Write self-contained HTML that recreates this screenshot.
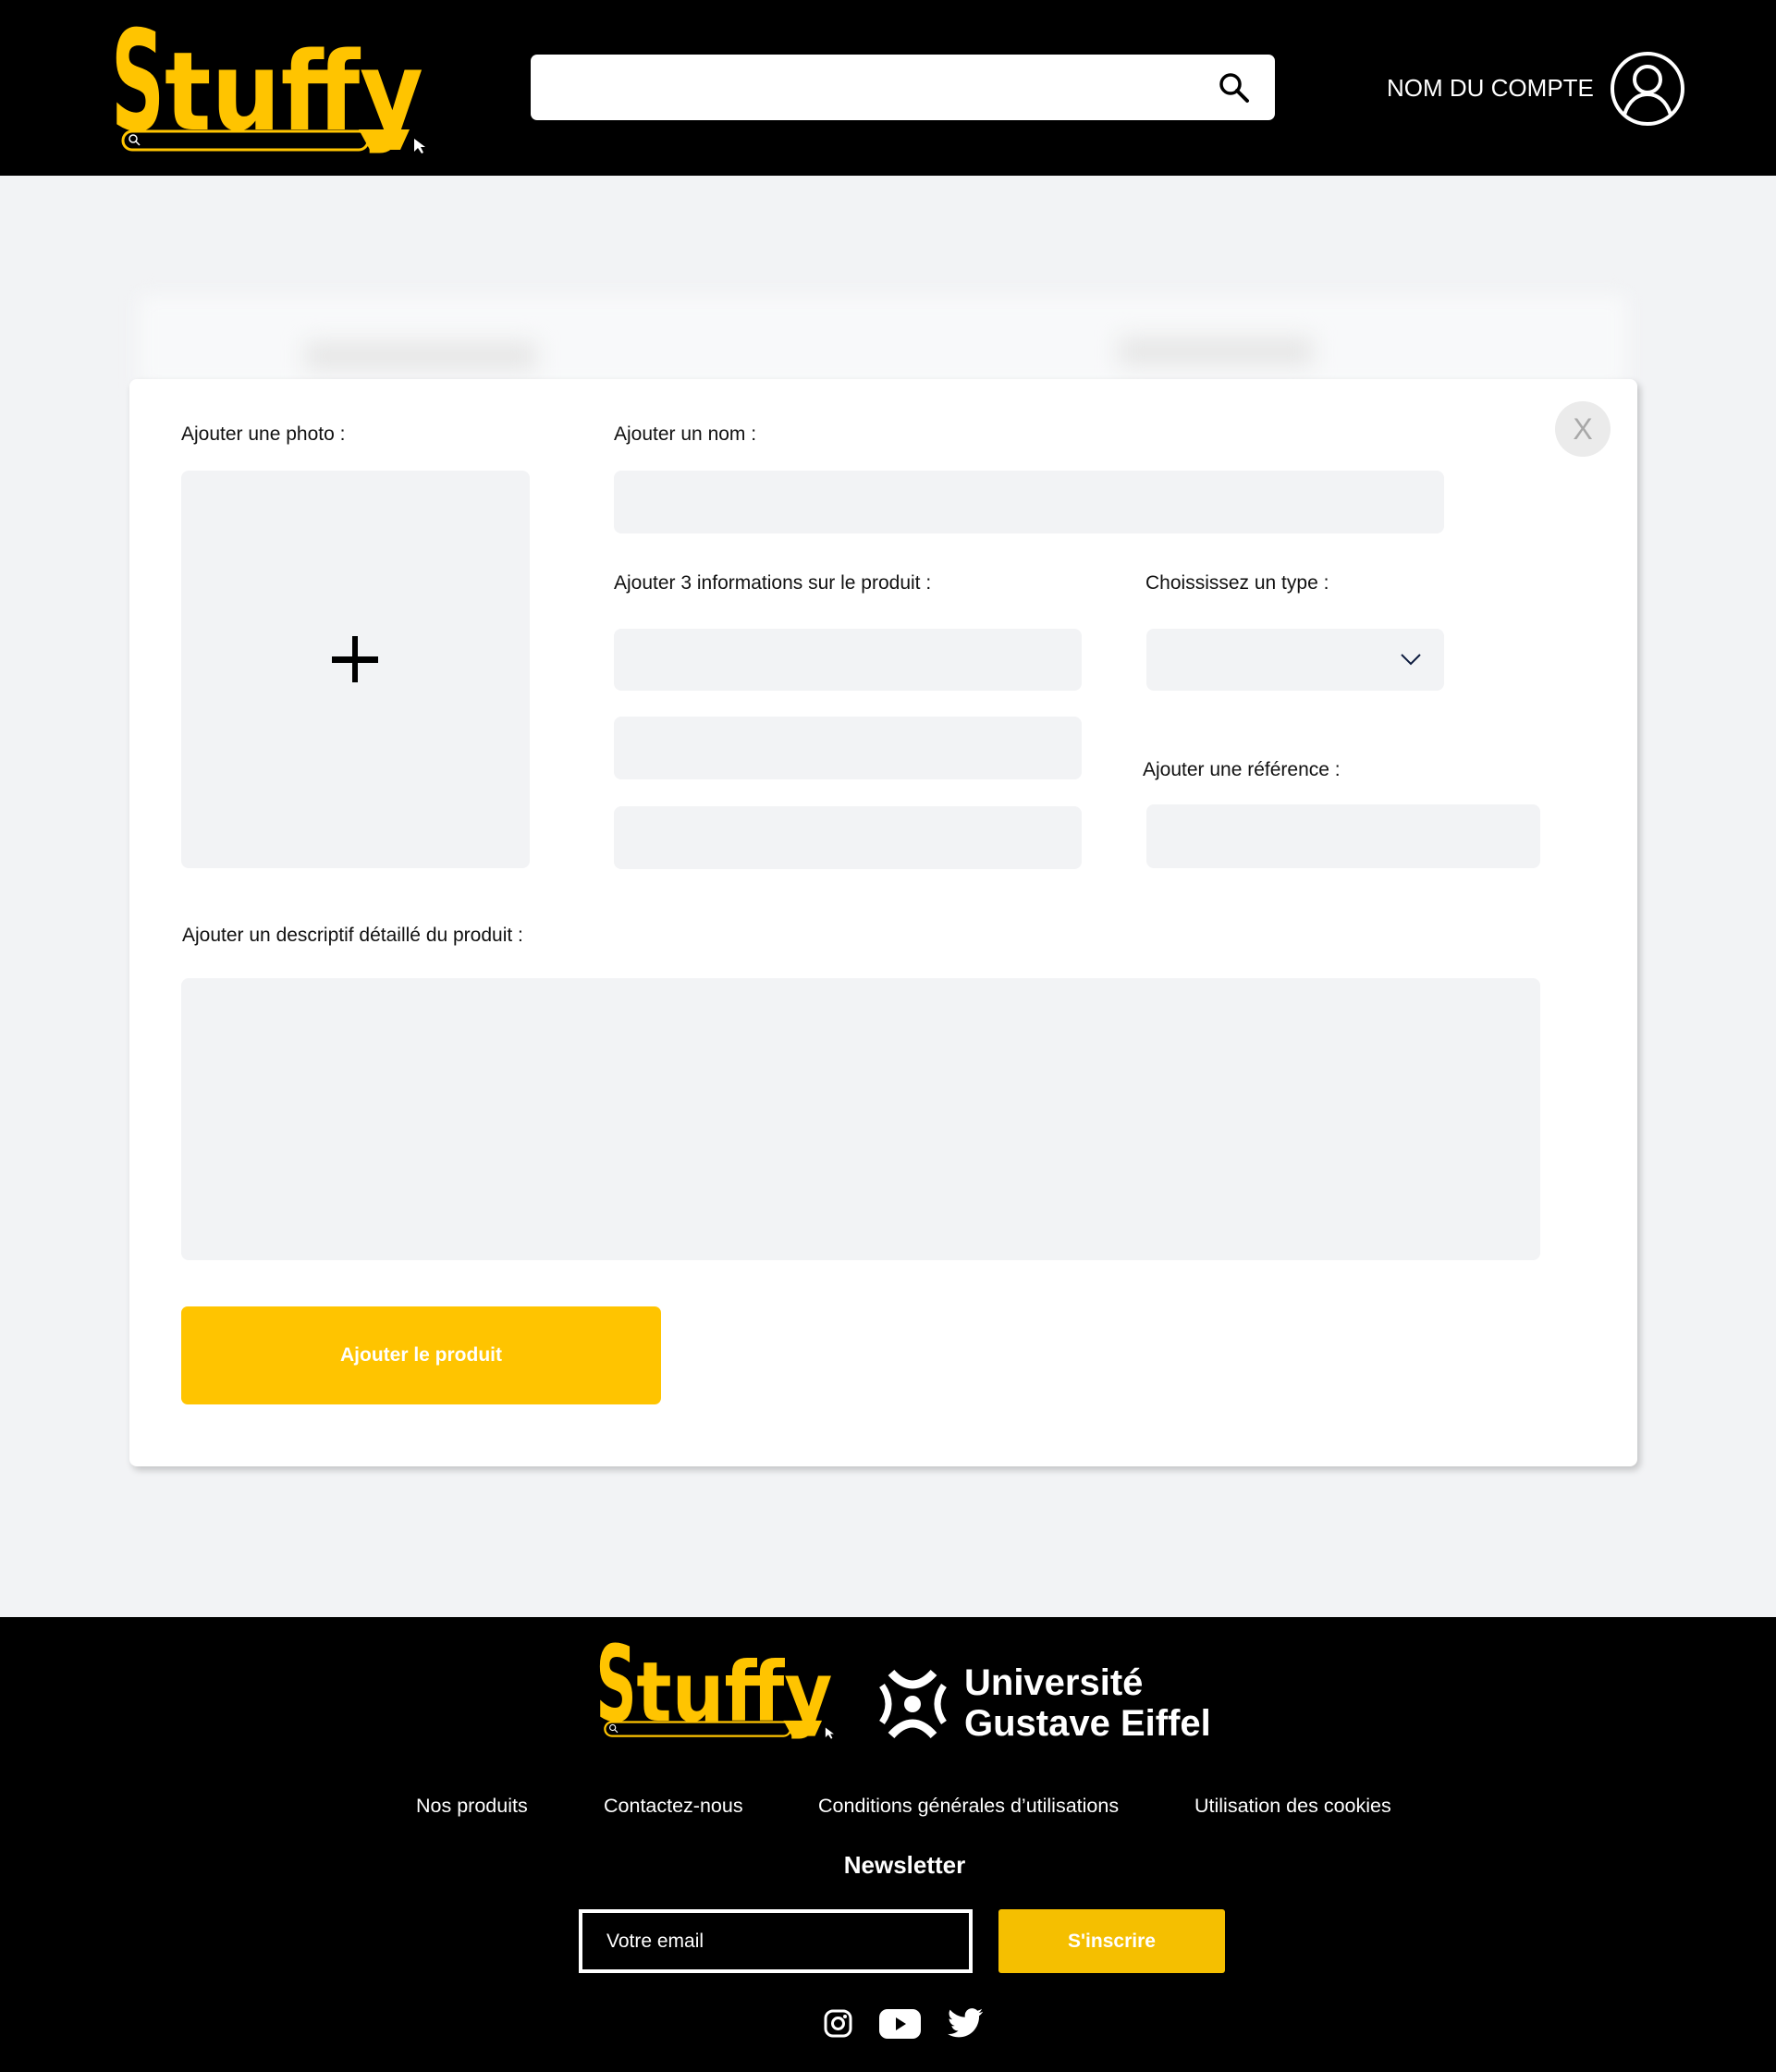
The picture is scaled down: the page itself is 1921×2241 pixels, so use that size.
<!DOCTYPE html>
<html><head><meta charset="utf-8">
<style>
*{margin:0;padding:0;box-sizing:border-box}
body{width:1921px;height:2241px;background:#f2f3f5;font-family:"Liberation Sans",sans-serif;position:relative;overflow:hidden}
.abs{position:absolute}
header{position:absolute;left:0;top:0;width:1921px;height:190px;background:#000}
.lbl{position:absolute;font-size:21px;color:#111;white-space:nowrap;margin-top:3px}
.inp{position:absolute;background:#f2f3f5;border-radius:8px}
footer{position:absolute;left:0;top:1749px;width:1921px;height:492px;background:#000;color:#fff}
.fl{position:absolute;top:1941px;font-size:21.5px;color:#fff;white-space:nowrap}
</style></head><body>
<header>
<svg class="abs" style="left:118px;top:24px" width="350" height="145" viewBox="0 0 350 145">
<text x="2" y="116" font-family="DejaVu Sans" font-weight="bold" font-size="150" fill="#ffc400" textLength="58" lengthAdjust="spacingAndGlyphs">S</text>
<text x="60" y="116" font-family="DejaVu Sans" font-weight="bold" font-size="118" fill="#ffc400" textLength="280" lengthAdjust="spacingAndGlyphs">tuffy</text>
<rect x="15" y="118" width="265" height="20" rx="10" fill="#000" stroke="#ffc400" stroke-width="3"/>
<path d="M270 116 L325 116 L315 138 L282 138 Z" fill="#ffc400"/>
<circle cx="26" cy="126" r="4" fill="none" stroke="#fff" stroke-width="1.5"/><path d="M29 129 L33 133" stroke="#fff" stroke-width="1.5"/>
<path d="M330 126 L330 140 L334 136 L338 142 L340 141 L337 135 L342 135 Z" fill="#fff"/>
</svg>
<div class="abs" style="left:574px;top:59px;width:805px;height:71px;background:#fff;border-radius:7px"></div>
<svg class="abs" style="left:1318px;top:78px" width="34" height="34" viewBox="0 0 34 34"><circle cx="13" cy="13" r="10" fill="none" stroke="#000" stroke-width="3.5"/><path d="M20 20 L31 31" stroke="#000" stroke-width="4" stroke-linecap="round"/></svg>
<div class="abs" style="left:1500px;top:80px;font-size:26px;color:#fff;white-space:nowrap">NOM DU COMPTE</div>
<svg class="abs" style="left:1740px;top:54px" width="84" height="84" viewBox="0 0 84 84"><circle cx="42" cy="42" r="38" fill="none" stroke="#fff" stroke-width="4"/><circle cx="42" cy="32" r="14" fill="none" stroke="#fff" stroke-width="4"/><path d="M17 70 C22 54 32 48 42 48 C52 48 62 54 67 70" fill="none" stroke="#fff" stroke-width="4"/></svg>
</header>
<div class="abs" style="left:150px;top:320px;width:1610px;height:100px;background:#f8f9fa;filter:blur(10px)"></div>
<div class="abs" style="left:330px;top:370px;width:250px;height:30px;background:#e6e6e6;filter:blur(12px)"></div>
<div class="abs" style="left:1210px;top:365px;width:210px;height:30px;background:#e6e6e6;filter:blur(12px)"></div>
<div class="abs" style="left:140px;top:410px;width:1631px;height:1176px;background:#fff;border-radius:8px;box-shadow:3px 4px 8px rgba(0,0,0,.2)"></div>
<div class="abs" style="left:1682px;top:434px;width:60px;height:60px;border-radius:50%;background:#ebebeb;color:#a8a8a8;font-size:32px;text-align:center;line-height:60px">X</div>
<div class="lbl" style="left:196px;top:455px">Ajouter une photo :</div>
<div class="inp" style="left:196px;top:509px;width:377px;height:430px"></div>
<div class="abs" style="left:359px;top:710px;width:50px;height:7px;background:#000"></div>
<div class="abs" style="left:381px;top:688px;width:6px;height:50px;background:#000"></div>
<div class="lbl" style="left:664px;top:455px">Ajouter un nom :</div>
<div class="inp" style="left:664px;top:509px;width:898px;height:68px"></div>
<div class="lbl" style="left:664px;top:616px">Ajouter 3 informations sur le produit :</div>
<div class="lbl" style="left:1239px;top:616px">Choississez un type :</div>
<div class="inp" style="left:664px;top:680px;width:506px;height:67px"></div>
<div class="inp" style="left:664px;top:775px;width:506px;height:68px"></div>
<div class="inp" style="left:664px;top:872px;width:506px;height:68px"></div>
<div class="inp" style="left:1240px;top:680px;width:322px;height:67px"></div>
<svg class="abs" style="left:1514px;top:705px" width="24" height="16" viewBox="0 0 24 16"><path d="M2 3 L12 13 L22 3" fill="none" stroke="#0d1b3e" stroke-width="2"/></svg>
<div class="lbl" style="left:1236px;top:818px">Ajouter une référence :</div>
<div class="inp" style="left:1240px;top:870px;width:426px;height:69px"></div>
<div class="lbl" style="left:197px;top:997px">Ajouter un descriptif détaillé du produit :</div>
<div class="inp" style="left:196px;top:1058px;width:1470px;height:305px"></div>
<div class="abs" style="left:196px;top:1413px;width:519px;height:106px;background:#ffc400;border-radius:7px;color:#fff;font-weight:bold;font-size:21px;text-align:center;line-height:106px">Ajouter le produit</div>
<footer></footer>
<svg class="abs" style="left:643px;top:1773px" width="265" height="110" viewBox="0 0 350 145">
<text x="2" y="116" font-family="DejaVu Sans" font-weight="bold" font-size="150" fill="#ffc400" textLength="58" lengthAdjust="spacingAndGlyphs">S</text>
<text x="60" y="116" font-family="DejaVu Sans" font-weight="bold" font-size="118" fill="#ffc400" textLength="280" lengthAdjust="spacingAndGlyphs">tuffy</text>
<rect x="15" y="118" width="265" height="20" rx="10" fill="#000" stroke="#ffc400" stroke-width="3"/>
<path d="M270 116 L325 116 L315 138 L282 138 Z" fill="#ffc400"/>
<circle cx="26" cy="126" r="4" fill="none" stroke="#fff" stroke-width="1.5"/><path d="M29 129 L33 133" stroke="#fff" stroke-width="1.5"/>
<path d="M330 126 L330 140 L334 136 L338 142 L340 141 L337 135 L342 135 Z" fill="#fff"/>
</svg>
<svg class="abs" style="left:950px;top:1805px" width="75" height="76" viewBox="0 0 75 76">
<path d="M14 4 Q37 30 60 4" fill="none" stroke="#fff" stroke-width="9"/>
<path d="M14 72 Q37 46 60 72" fill="none" stroke="#fff" stroke-width="9"/>
<path d="M4 18 Q18 38 4 58" fill="none" stroke="#fff" stroke-width="7"/>
<path d="M71 18 Q57 38 71 58" fill="none" stroke="#fff" stroke-width="7"/>
<circle cx="37" cy="38" r="9" fill="#fff"/>
</svg>
<div class="abs" style="left:1043px;top:1798px;font-size:40px;font-weight:bold;color:#fff;line-height:44px;white-space:nowrap">Université<br>Gustave Eiffel</div>
<div class="fl" style="left:450px">Nos produits</div>
<div class="fl" style="left:653px">Contactez-nous</div>
<div class="fl" style="left:885px">Conditions générales d’utilisations</div>
<div class="fl" style="left:1292px">Utilisation des cookies</div>
<div class="abs" style="left:0;width:1957px;text-align:center;top:2002px;font-size:26px;font-weight:bold;color:#fff">Newsletter</div>
<div class="abs" style="left:626px;top:2065px;width:426px;height:69px;border:4px solid #fff;color:#fff;font-size:21px;line-height:61px;padding-left:26px">Votre email</div>
<div class="abs" style="left:1080px;top:2065px;width:245px;height:69px;background:#f5bf00;border-radius:3px;color:#fff;font-weight:bold;font-size:21px;text-align:center;line-height:69px">S'inscrire</div>
<svg class="abs" style="left:891px;top:2173px" width="31" height="31" viewBox="0 0 31 31"><rect x="2" y="2" width="27" height="27" rx="8" fill="none" stroke="#fff" stroke-width="3"/><circle cx="15.5" cy="15.5" r="6" fill="none" stroke="#fff" stroke-width="3"/><circle cx="23" cy="8" r="2" fill="#fff"/></svg>
<svg class="abs" style="left:951px;top:2173px" width="45" height="32" viewBox="0 0 45 32"><rect x="0" y="0" width="45" height="32" rx="9" fill="#fff"/><path d="M18 9 L29 16 L18 23 Z" fill="#000"/></svg>
<svg class="abs" style="left:1025px;top:2172px" width="38" height="32" viewBox="0 0 24 20"><path d="M24 2.3c-.9.4-1.8.7-2.8.8 1-.6 1.8-1.6 2.2-2.7-1 .6-2 1-3.1 1.2A4.9 4.9 0 0 0 11.9 6C7.8 5.8 4.2 3.9 1.7.9.3 3.2 1 6.2 3.2 7.6c-.8 0-1.6-.2-2.2-.6 0 2.4 1.7 4.4 3.9 4.9-.7.2-1.5.2-2.2.1.6 2 2.4 3.4 4.6 3.4A9.9 9.9 0 0 1 0 17.5 14 14 0 0 0 7.5 19.7c9.1 0 14-7.5 14-14v-.6c1-.7 1.8-1.6 2.5-2.6z" fill="#fff"/></svg>
</body></html>
